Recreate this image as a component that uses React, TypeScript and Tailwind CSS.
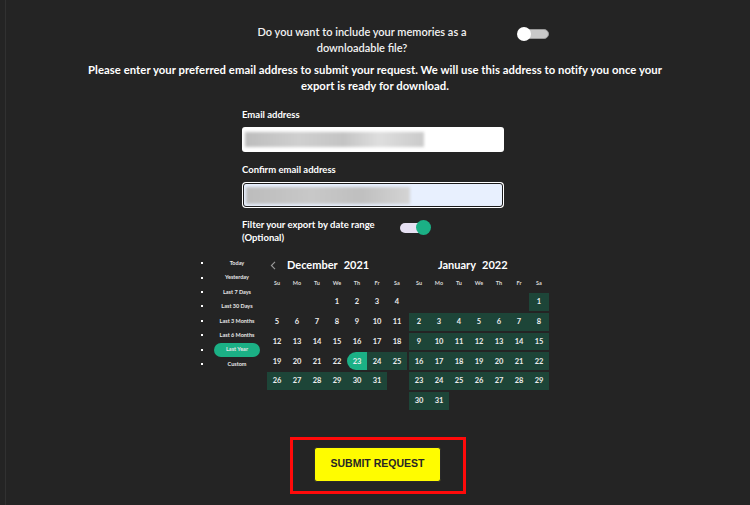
import React from "react";

const font = { fontFamily: "Lato, 'Open Sans', sans-serif" };

const presets = [
  "Today",
  "Yesterday",
  "Last 7 Days",
  "Last 30 Days",
  "Last 3 Months",
  "Last 6 Months",
  "Last Year",
  "Custom",
];

const weekdays = ["Su", "Mo", "Tu", "We", "Th", "Fr", "Sa"];

type Cell = { d: number | null; kind: "none" | "range" | "start" };

function buildMonth(offset: number, days: number, kindOf: (d: number) => Cell["kind"]): Cell[][] {
  const cells: Cell[] = [];
  for (let i = 0; i < offset; i++) cells.push({ d: null, kind: "none" });
  for (let d = 1; d <= days; d++) cells.push({ d, kind: kindOf(d) });
  const rows: Cell[][] = [];
  for (let i = 0; i < cells.length; i += 7) rows.push(cells.slice(i, i + 7));
  return rows;
}

const dec = buildMonth(3, 31, (d) => (d === 23 ? "start" : d > 23 ? "range" : "none"));
const jan = buildMonth(6, 31, () => "range");

function Month({ title, year, rows, chevron }: { title: string; year: string; rows: Cell[][]; chevron?: boolean }) {
  return (
    <div className="w-[140px] flex flex-col">
      <div className="h-[18px] flex items-center relative">
        {chevron ? (
          <svg className="ml-[3px] w-[6px] h-[9px]" viewBox="0 0 6 9" fill="none">
            <path d="M5 0.8 L1.4 4.5 L5 8.2" stroke="#9a9a9a" strokeWidth="1.1" />
          </svg>
        ) : null}
        <div className={`flex items-center gap-[6px] text-[11px] font-bold text-white ${chevron ? "ml-[11px]" : "ml-[29px]"}`}>
          <span>{title}</span>
          <span>{year}</span>
        </div>
      </div>
      <div className="h-[18px] grid grid-cols-7 items-center">
        {weekdays.map((w) => (
          <div key={w} className="text-center text-[5.5px] font-bold text-[#d8d8d8]">
            {w}
          </div>
        ))}
      </div>
      {rows.map((row, ri) => (
        <div key={ri} className="h-[19.8px] py-px grid grid-cols-7">
          {row.map((c, ci) => (
            <div
              key={ci}
              className={
                "h-[17.8px] flex items-center justify-center text-[7.5px] font-bold text-[#ececec] " +
                (c.kind === "start"
                  ? "bg-[#1bb085] rounded-l-full"
                  : c.kind === "range"
                  ? "bg-[#1d4538]"
                  : "")
              }
            >
              {c.d ?? ""}
            </div>
          ))}
        </div>
      ))}
    </div>
  );
}

export default function App() {
  return (
    <div
      className="w-[750px] h-[505px] overflow-hidden bg-[linear-gradient(to_right,#242424_5px,#313131_5px,#313131_6px,#242424_6px)] text-white"
      style={font}
    >
      {/* question row */}
      <div className="pt-[24px] flex items-start">
        <div className="ml-[242px] w-[240px] text-center text-[11px] font-semibold leading-[16px] text-[#f2f2f2] whitespace-nowrap">
          Do you want to include your memories as a
          <br />
          downloadable file?
        </div>
        <div className="ml-[35px] mt-[3px] w-[32px] h-[14px] relative flex items-center">
          <div className="ml-[5px] w-[27px] h-[10px] rounded-full bg-[#c9c9c9] border border-[#9a9a9a]" />
          <div className="absolute left-0 top-0 w-[14px] h-[14px] rounded-full bg-white" />
        </div>
      </div>

      {/* paragraph */}
      <div className="mt-[6px] text-center text-[11.3px] tracking-[0.05px] font-bold leading-[16px] whitespace-nowrap">
        Please enter your preferred email address to submit your request. We will use this address to notify you once your
        <br />
        export is ready for download.
      </div>

      {/* form */}
      <div className="ml-[242px] w-[262px] flex flex-col">
        <div className="mt-[15px] h-[12px] leading-[12px] text-[9.5px] font-bold">Email address</div>
        <div className="mt-[6px] h-[25px] rounded-[3px] bg-white flex items-center pl-[3px]">
          <div className="w-[179px] h-[15px] blur-[1.5px] bg-[linear-gradient(to_right,#bdbdbd,#cfcfcf_30%,#c4c4c4_55%,#dedede_75%,#cacaca)]" />
        </div>
        <div className="mt-[12px] h-[12px] leading-[12px] text-[9.5px] font-bold">Confirm email address</div>
        <div className="mt-[6px] h-[26px] rounded-[4px] bg-white p-px">
          <div className="h-full rounded-[3px] border border-[#1a1a1a] bg-[#e8f0fe] flex items-center pl-[2px]">
            <div className="w-[164px] h-[17px] blur-[1.5px] bg-[linear-gradient(to_right,#bcbcbc,#c8c8c8_40%,#bfbfbf_70%,#d4d4d4)]" />
          </div>
        </div>
        <div className="mt-[10px] flex items-start">
          <div className="text-[9.5px] font-bold leading-[13px] whitespace-nowrap">
            Filter your export by date range
            <br />
            (Optional)
          </div>
          <div className="ml-[24px] mt-[2px] w-[32px] h-[15px] relative flex items-center">
            <div className="ml-[1px] w-[28px] h-[10px] rounded-full bg-[#e6e0f2]" />
            <div className="absolute right-0 top-0 w-[15px] h-[15px] rounded-full bg-[#1bb085]" />
          </div>
        </div>
      </div>

      {/* calendar */}
      <div className="mt-[12px] ml-[196px] flex items-start">
        <ul className="w-[71px] flex flex-col">
          {presets.map((p) => (
            <li key={p} className="h-[14.4px] flex items-center">
              <span className="ml-[5px] w-[2px] h-[2px] bg-white" />
              <span
                className={
                  "ml-[11px] w-[46px] h-[14px] flex items-center justify-center text-[5.5px] font-bold text-[#e8e8e8] " +
                  (p === "Last Year" ? "bg-[#1bb085] rounded-full" : "")
                }
              >
                {p}
              </span>
            </li>
          ))}
        </ul>
        <Month title="December" year="2021" rows={dec} chevron />
        <div className="ml-[2px]">
          <Month title="January" year="2022" rows={jan} />
        </div>
      </div>

      {/* submit */}
      <div className="mt-[26px] ml-[290px] w-[176px] h-[57px] border-[3px] border-[#ff0a0a] pt-[7px] pl-[21px]">
        <button
          className="w-[127px] h-[35px] rounded-[3px] bg-[#fffc00] border border-[#2a2a2a] text-[10.5px] font-bold text-[#262626]"
          style={{ fontFamily: "'Liberation Sans', Arial, sans-serif" }}
        >
          SUBMIT REQUEST
        </button>
      </div>
    </div>
  );
}
